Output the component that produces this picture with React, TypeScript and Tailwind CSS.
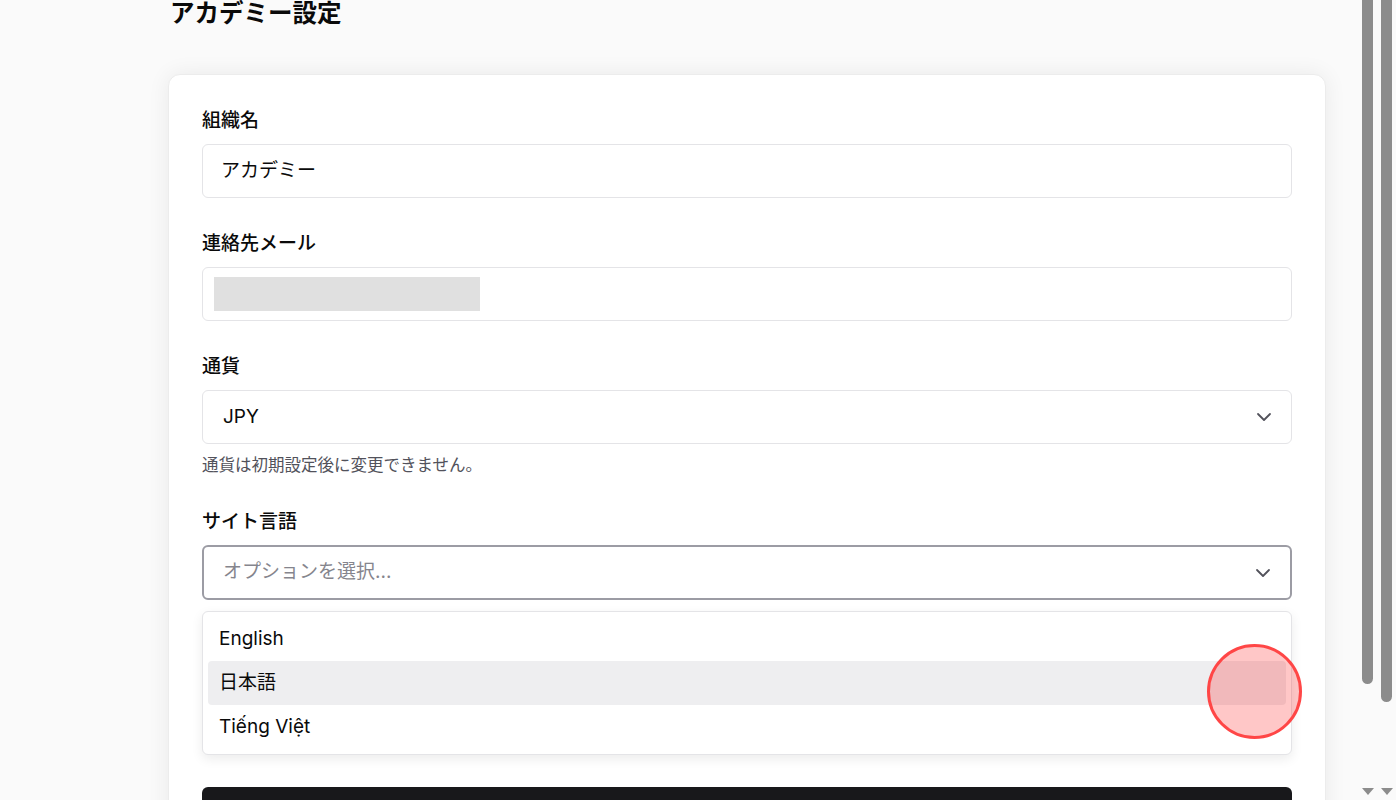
import { ChevronDown } from "lucide-react";

const font = `font-['Inter','Noto_Sans_CJK_JP',sans-serif]`;

function Label({ children }: { children: React.ReactNode }) {
  return (
    <div className="text-[19px] leading-[28px] font-medium text-[#0a0a0a] mb-[9px]">
      {children}
    </div>
  );
}

function SelectBox({ value, placeholder, focused }: { value?: string; placeholder?: string; focused?: boolean }) {
  return (
    <div
      className={`flex items-center justify-between bg-white rounded-[6px] pr-[15px] ${
        focused ? "h-[55px] border-2 border-[#9c9ca4] pl-[19px]" : "h-[54px] border border-[#e4e4e7] pl-[20px]"
      }`}
    >
      {value ? (
        <span className="text-[19px] text-[#0a0a0a]">{value}</span>
      ) : (
        <span className="text-[19px] text-[#85858d]">{placeholder}</span>
      )}
      <ChevronDown size={24} strokeWidth={1.8} className="text-[#52525b]" />
    </div>
  );
}

const languages = ["English", "日本語", "Tiếng Việt"];

export default function App() {
  return (
    <div className={`${font} h-[800px] overflow-hidden bg-[#fafafa] flex`}>
      {/* main content */}
      <div className="flex-1 pl-[168px] pr-[32px]">
        <h1 className="-mt-[3px] text-[24.5px] leading-[32px] font-bold text-[#0a0a0a] pl-[2px] mb-[45px]">
          アカデミー設定
        </h1>

        <div className="bg-white border border-[#ececec] rounded-[12px] shadow-[0_0_22px_rgba(0,0,0,0.07)] px-[33px] pt-8 pb-8">
          <div className="flex flex-col gap-8">
            <div>
              <Label>組織名</Label>
              <div className="h-[54px] flex items-center border border-[#e4e4e7] rounded-[6px] pl-[18px] text-[19px] text-[#0a0a0a]">
                アカデミー
              </div>
            </div>

            <div>
              <Label>連絡先メール</Label>
              <div className="h-[54px] flex items-center border border-[#e4e4e7] rounded-[6px] pl-[11px]">
                <div className="w-[266px] h-[34px] bg-[#e0e0e0]" />
              </div>
            </div>

            <div>
              <Label>通貨</Label>
              <SelectBox value="JPY" />
              <p className="mt-[10px] text-[16.5px] leading-[22px] text-[#52525b]">
                通貨は初期設定後に変更できません。
              </p>
            </div>

            <div>
              <Label>サイト言語</Label>
              <SelectBox placeholder="オプションを選択..." focused />
              <div className="relative mt-[11px] bg-white border border-[#e4e4e7] rounded-[6px] shadow-[0_4px_12px_rgba(0,0,0,0.08)] p-[5px]">
                {languages.map((lang, idx) => (
                  <div
                    key={lang}
                    className={`h-[44px] flex items-center pl-[11px] rounded-[4px] text-[19px] text-[#0a0a0a] ${
                      idx === 1 ? "bg-[#eeeef0]" : ""
                    }`}
                  >
                    {lang}
                  </div>
                ))}
                {/* click indicator */}
                <div className="absolute left-[1004px] top-[32px] w-[95px] h-[95px] rounded-full border-[3px] border-[#ff4646] bg-[rgba(255,0,0,0.22)]" />
              </div>
            </div>

            <div className="h-[54px] bg-[#18181b] rounded-[6px]" />
          </div>
        </div>
      </div>

      {/* scrollbars */}
      <div className="w-[38px] flex gap-[8px] pl-[4px] pr-[4px] bg-[#fafafa]">
        <div className="w-[11px] flex flex-col items-center">
          <div className="w-[11px] h-[684px] rounded-b-full bg-[#8c8c8c]" />
          <div className="mt-auto mb-[5px] w-0 h-0 border-l-[6px] border-r-[6px] border-t-[7px] border-l-transparent border-r-transparent border-t-[#8c8c8c]" />
        </div>
        <div className="w-[11px] flex flex-col items-center">
          <div className="w-[11px] h-[702px] rounded-b-full bg-[#8c8c8c]" />
          <div className="mt-auto mb-[5px] w-0 h-0 border-l-[6px] border-r-[6px] border-t-[7px] border-l-transparent border-r-transparent border-t-[#8c8c8c]" />
        </div>
      </div>
    </div>
  );
}
